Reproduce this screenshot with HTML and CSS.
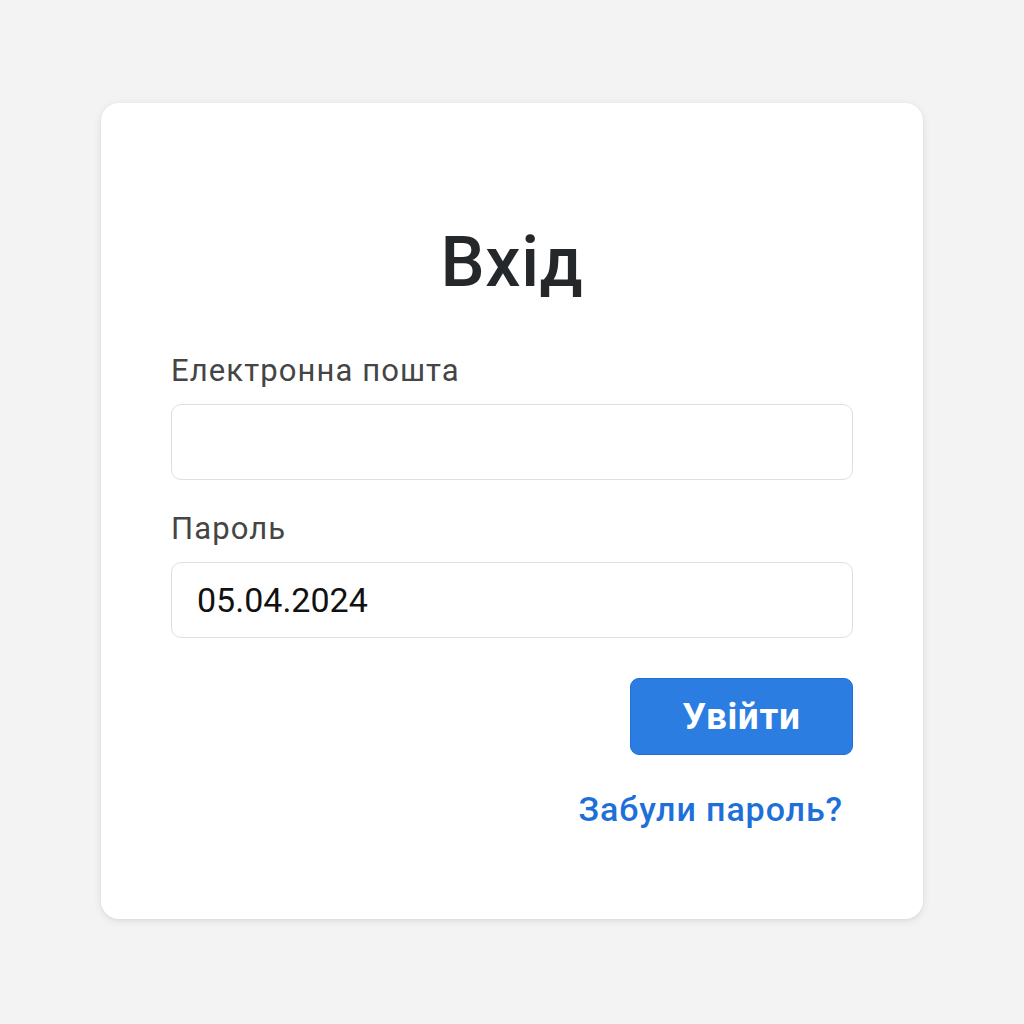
FILE: index.html
```html
<!DOCTYPE html>
<html lang="uk">
<head>
<meta charset="utf-8">
<link rel="stylesheet" href="styles.css">
</head>
<body>
<main class="card">
  <h1 class="title">Вхід</h1>
  <form class="form">
    <label class="label" for="email">Електронна пошта</label>
    <div class="input" id="email"></div>
    <label class="label label-second" for="pass">Пароль</label>
    <div class="input" id="pass">05.04.2024</div>
    <div class="actions">
      <button type="button" class="btn">Увійти</button>
      <a class="link" href="#">Забули пароль?</a>
    </div>
  </form>
</main>
</body>
</html>
```

FILE: styles.css
```css
* { box-sizing: border-box; }
html, body { margin: 0; padding: 0; }
body {
  width: 1024px;
  height: 1024px;
  background: #f3f3f3;
  font-family: Roboto, "Liberation Sans", sans-serif;
  padding: 103px 101px 0 101px;
}
.card {
  width: 822px;
  height: 816px;
  background: #ffffff;
  border-radius: 18px;
  box-shadow: 0 2px 10px rgba(0,0,0,0.08), 0 1px 3px rgba(0,0,0,0.06);
  padding: 119px 70px 0 70px;
  display: flex;
  flex-direction: column;
}
.title {
  margin: 0;
  text-align: center;
  font-size: 70px;
  font-weight: 500;
  line-height: 80px;
  color: #25282b;
  letter-spacing: 0.6px;
}
.form {
  display: flex;
  flex-direction: column;
  margin-top: 51px;
}
.label {
  font-size: 31px;
  line-height: 36px;
  color: #454545;
  letter-spacing: 1.1px;
  margin-bottom: 15px;
}
.label-second { margin-top: 31px; }
.input {
  height: 76px;
  border: 1.5px solid #dcdfe3;
  border-radius: 10px;
  padding: 0 25px;
  font-size: 34px;
  color: #111;
  display: flex;
  align-items: center;
}
.actions {
  display: flex;
  flex-direction: column;
  align-items: flex-end;
  margin-top: 40px;
}
.btn {
  width: 223px;
  height: 77px;
  border: 1.5px solid #1f6fd6;
  border-radius: 9px;
  background: #2b7de1;
  color: #fff;
  font-family: Roboto, "Liberation Sans", sans-serif;
  font-size: 37px;
  font-weight: 700;
  letter-spacing: 0.6px;
  padding: 0;
}
.link {
  margin-top: 34px;
  margin-right: 10px;
  font-size: 34px;
  font-weight: 500;
  color: #1e70d8;
  text-decoration: none;
  line-height: 40px;
  letter-spacing: 0.9px;
}
```
